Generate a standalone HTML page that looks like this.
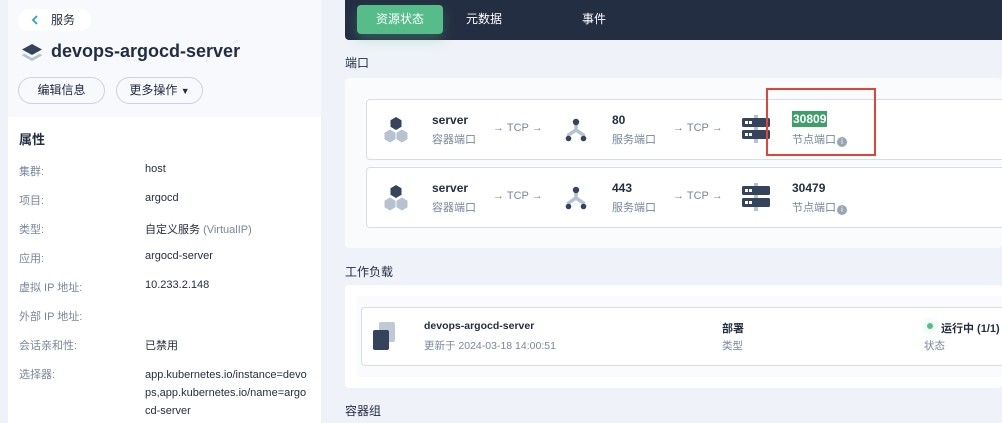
<!DOCTYPE html>
<html><head><meta charset="utf-8"><style>
*{box-sizing:border-box;margin:0;padding:0}
body{width:1002px;height:423px;overflow:hidden;background:#eff2f8;font-family:"Liberation Sans","Noto Sans CJK SC",sans-serif;color:#242e42;position:relative;font-size:12px}
.abs{position:absolute}
.left{left:8px;top:0;width:313px;height:423px;background:#f7f9fc}
.back{left:18px;top:9px;width:73px;height:22px;background:#fff;border-radius:11px;font-size:12px;line-height:22px;padding-left:33px;color:#242e42}
.title{left:51px;top:41px;font-size:18px;font-weight:bold;color:#242e42}
.btn{top:77px;height:27px;border:1px solid #ccd3db;border-radius:14px;font-size:12px;line-height:25px;text-align:center;background:#f7f9fc}
.card{left:8px;top:117px;width:313px;height:306px;background:#fff}
.lab{left:19px;color:#79879c;font-size:11px}
.val{left:145px;color:#242e42;font-size:11px}
.tabs{left:345px;top:0;width:657px;height:40px;background:#242e42;border-radius:0 0 0 4px}
.tab{top:5px;height:29px;line-height:29px;color:#fff;font-size:12px;text-align:center;width:86px}
.sec{left:345px;font-size:12px;color:#242e42}
.panel{left:345px;width:657px;background:#f9fbfd;border-radius:4px}
.row{left:366px;width:640px;height:61px;background:#fff;border:1px solid #d8dee5;border-radius:4px}
.b{font-weight:bold;font-size:12px;color:#242e42}
.g{font-size:11px;color:#79879c}
.tcp{font-size:11px;color:#79879c}
.i{display:inline-block;width:10px;height:10px;border-radius:50%;background:#9aa5b4;color:#fff;font-size:8px;line-height:10px;text-align:center;margin-left:1px;vertical-align:-1px}
</style></head><body>
<div class="abs left"></div>
<div class="abs back"><svg class="abs" style="left:13px;top:6px" width="8" height="10" viewBox="0 0 8 10"><path d="M6 1 L2 5 L6 9" fill="none" stroke="#329dce" stroke-width="1.8"/></svg>服务</div>
<svg class="abs" style="left:21px;top:43px" width="22" height="20" viewBox="0 0 22 20"><path d="M11 1 L21 6.5 L11 12 L1 6.5Z" fill="#36435c"/><path d="M3 10.5 L11 15 L19 10.5 L21 12.5 L11 18 L1 12.5Z" fill="#b6c2cf"/></svg>
<div class="abs title">devops-argocd-server</div>
<div class="abs btn" style="left:18px;width:87px">编辑信息</div>
<div class="abs btn" style="left:116px;width:87px">更多操作 <span style="font-size:9px">▼</span></div>
<div class="abs card"></div>
<div class="abs" style="left:19px;top:129px;font-size:13px;font-weight:bold">属性</div>
<div class="abs lab" style="top:163px">集群:</div><div class="abs val" style="top:163px">host</div>
<div class="abs lab" style="top:192px">项目:</div><div class="abs val" style="top:192px">argocd</div>
<div class="abs lab" style="top:221px">类型:</div><div class="abs val" style="top:221px">自定义服务 <span style="color:#79879c">(VirtualIP)</span></div>
<div class="abs lab" style="top:250px">应用:</div><div class="abs val" style="top:250px">argocd-server</div>
<div class="abs lab" style="top:279px">虚拟 IP 地址:</div><div class="abs val" style="top:279px">10.233.2.148</div>
<div class="abs lab" style="top:308px">外部 IP 地址:</div>
<div class="abs lab" style="top:337px">会话亲和性:</div><div class="abs val" style="top:337px">已禁用</div>
<div class="abs lab" style="top:366px">选择器:</div><div class="abs val" style="top:366px;width:166px;line-height:18px;word-break:break-all">app.kubernetes.io/instance=devops,app.kubernetes.io/name=argocd-server</div>

<div class="abs tabs"></div>
<div class="abs tab" style="left:357px;background:#55bc8a;border-radius:4px;box-shadow:0 6px 12px rgba(85,188,138,.3)">资源状态</div>
<div class="abs tab" style="left:441px">元数据</div>
<div class="abs tab" style="left:551px">事件</div>

<div class="abs sec" style="top:54px">端口</div>
<div class="abs panel" style="top:78px;height:170px"></div>

<div class="abs row" style="top:99px"></div>
<div class="abs row" style="top:167px"></div>

<svg class="abs" style="left:382px;top:116px" width="28" height="28" viewBox="0 0 28 28"><path d="M14 1 L19.5 4.2 L19.5 10.8 L14 14 L8.5 10.8 L8.5 4.2Z" fill="#36435c"/><path d="M8 13.5 L13.5 16.7 L13.5 23.3 L8 26.5 L2.5 23.3 L2.5 16.7Z" fill="#b6c2cf"/><path d="M20 13.5 L25.5 16.7 L25.5 23.3 L20 26.5 L14.5 23.3 L14.5 16.7Z" fill="#b6c2cf"/></svg>
<svg class="abs" style="left:382px;top:184px" width="28" height="28" viewBox="0 0 28 28"><path d="M14 1 L19.5 4.2 L19.5 10.8 L14 14 L8.5 10.8 L8.5 4.2Z" fill="#36435c"/><path d="M8 13.5 L13.5 16.7 L13.5 23.3 L8 26.5 L2.5 23.3 L2.5 16.7Z" fill="#b6c2cf"/><path d="M20 13.5 L25.5 16.7 L25.5 23.3 L20 26.5 L14.5 23.3 L14.5 16.7Z" fill="#b6c2cf"/></svg>
<div class="abs b" style="left:432px;top:113px">server</div><div class="abs g" style="left:432px;top:131px">容器端口</div>
<div class="abs b" style="left:432px;top:181px">server</div><div class="abs g" style="left:432px;top:199px">容器端口</div>
<div class="abs tcp" style="left:493px;top:122px">→ TCP →</div><div class="abs tcp" style="left:493px;top:190px">→ TCP →</div>
<svg class="abs" style="left:564px;top:117px" width="24" height="26" viewBox="0 0 24 26"><g fill="none" stroke="#b6c2cf" stroke-width="3.5" stroke-linecap="round"><path d="M12 7 V13 L4.5 18 V20 M12 13 L19.5 18 V20"/></g><circle cx="12" cy="5" r="3.2" fill="#36435c"/><circle cx="4.5" cy="21.5" r="2.8" fill="#36435c"/><circle cx="19.5" cy="21.5" r="2.8" fill="#36435c"/></svg>
<svg class="abs" style="left:564px;top:185px" width="24" height="26" viewBox="0 0 24 26"><g fill="none" stroke="#b6c2cf" stroke-width="3.5" stroke-linecap="round"><path d="M12 7 V13 L4.5 18 V20 M12 13 L19.5 18 V20"/></g><circle cx="12" cy="5" r="3.2" fill="#36435c"/><circle cx="4.5" cy="21.5" r="2.8" fill="#36435c"/><circle cx="19.5" cy="21.5" r="2.8" fill="#36435c"/></svg>
<div class="abs b" style="left:612px;top:113px">80</div><div class="abs g" style="left:612px;top:131px">服务端口</div>
<div class="abs b" style="left:612px;top:181px">443</div><div class="abs g" style="left:612px;top:199px">服务端口</div>
<div class="abs tcp" style="left:673px;top:122px">→ TCP →</div><div class="abs tcp" style="left:673px;top:190px">→ TCP →</div>
<svg class="abs" style="left:742px;top:115px" width="28" height="28" viewBox="0 0 28 28"><rect x="12" y="0" width="4" height="28" fill="#b6c2cf"/><rect x="0" y="3" width="28" height="9" rx="1.5" fill="#36435c"/><rect x="0" y="15" width="28" height="9" rx="1.5" fill="#36435c"/><rect x="3" y="6" width="3" height="3" fill="#fff"/><rect x="7" y="6" width="3" height="3" fill="#fff"/><rect x="3" y="18" width="3" height="3" fill="#fff"/><rect x="7" y="18" width="3" height="3" fill="#fff"/></svg>
<svg class="abs" style="left:742px;top:183px" width="28" height="28" viewBox="0 0 28 28"><rect x="12" y="0" width="4" height="28" fill="#b6c2cf"/><rect x="0" y="3" width="28" height="9" rx="1.5" fill="#36435c"/><rect x="0" y="15" width="28" height="9" rx="1.5" fill="#36435c"/><rect x="3" y="6" width="3" height="3" fill="#fff"/><rect x="7" y="6" width="3" height="3" fill="#fff"/><rect x="3" y="18" width="3" height="3" fill="#fff"/><rect x="7" y="18" width="3" height="3" fill="#fff"/></svg>
<div class="abs b" style="left:792px;top:111px;background:#3e9f6a;color:#fff;padding:1px 1px;font-size:12px">30809</div>
<div class="abs g" style="left:792px;top:131px">节点端口<span class="i">i</span></div>
<div class="abs b" style="left:792px;top:181px">30479</div>
<div class="abs g" style="left:792px;top:199px">节点端口<span class="i">i</span></div>
<div class="abs" style="left:766px;top:88px;width:110px;height:68px;border:2px solid #e0443a"></div>

<div class="abs sec" style="top:263px">工作负载</div>
<div class="abs panel" style="top:285px;height:103px;background:#fff"></div>
<div class="abs" style="left:357px;top:296px;width:645px;height:81px;background:#f9fbfd"></div>
<div class="abs row" style="left:361px;top:307px;height:59px;width:645px"></div>
<div class="abs" style="left:379px;top:322px;width:16px;height:20px;background:#c1cad4;border-radius:2px"></div>
<div class="abs" style="left:373px;top:330px;width:16px;height:20px;background:#36435c;border-radius:2px"></div>
<div class="abs" style="left:424px;top:320px;font-size:10.5px;font-weight:bold">devops-argocd-server</div>
<div class="abs g" style="left:424px;top:338px;font-size:10.5px">更新于 2024-03-18 14:00:51</div>
<div class="abs" style="left:722px;top:320px;font-size:11px;font-weight:bold">部署</div>
<div class="abs g" style="left:722px;top:338px;font-size:10.5px">类型</div>
<div class="abs" style="left:927px;top:323px;width:6px;height:6px;border-radius:50%;background:#55bc8a;box-shadow:0 0 6px 4px rgba(85,188,138,.12)"></div>
<div class="abs" style="left:941px;top:320px;font-size:11px;font-weight:bold">运行中 (1/1)</div>
<div class="abs g" style="left:924px;top:338px;font-size:10.5px">状态</div>

<div class="abs sec" style="top:402px">容器组</div>
</body></html>
